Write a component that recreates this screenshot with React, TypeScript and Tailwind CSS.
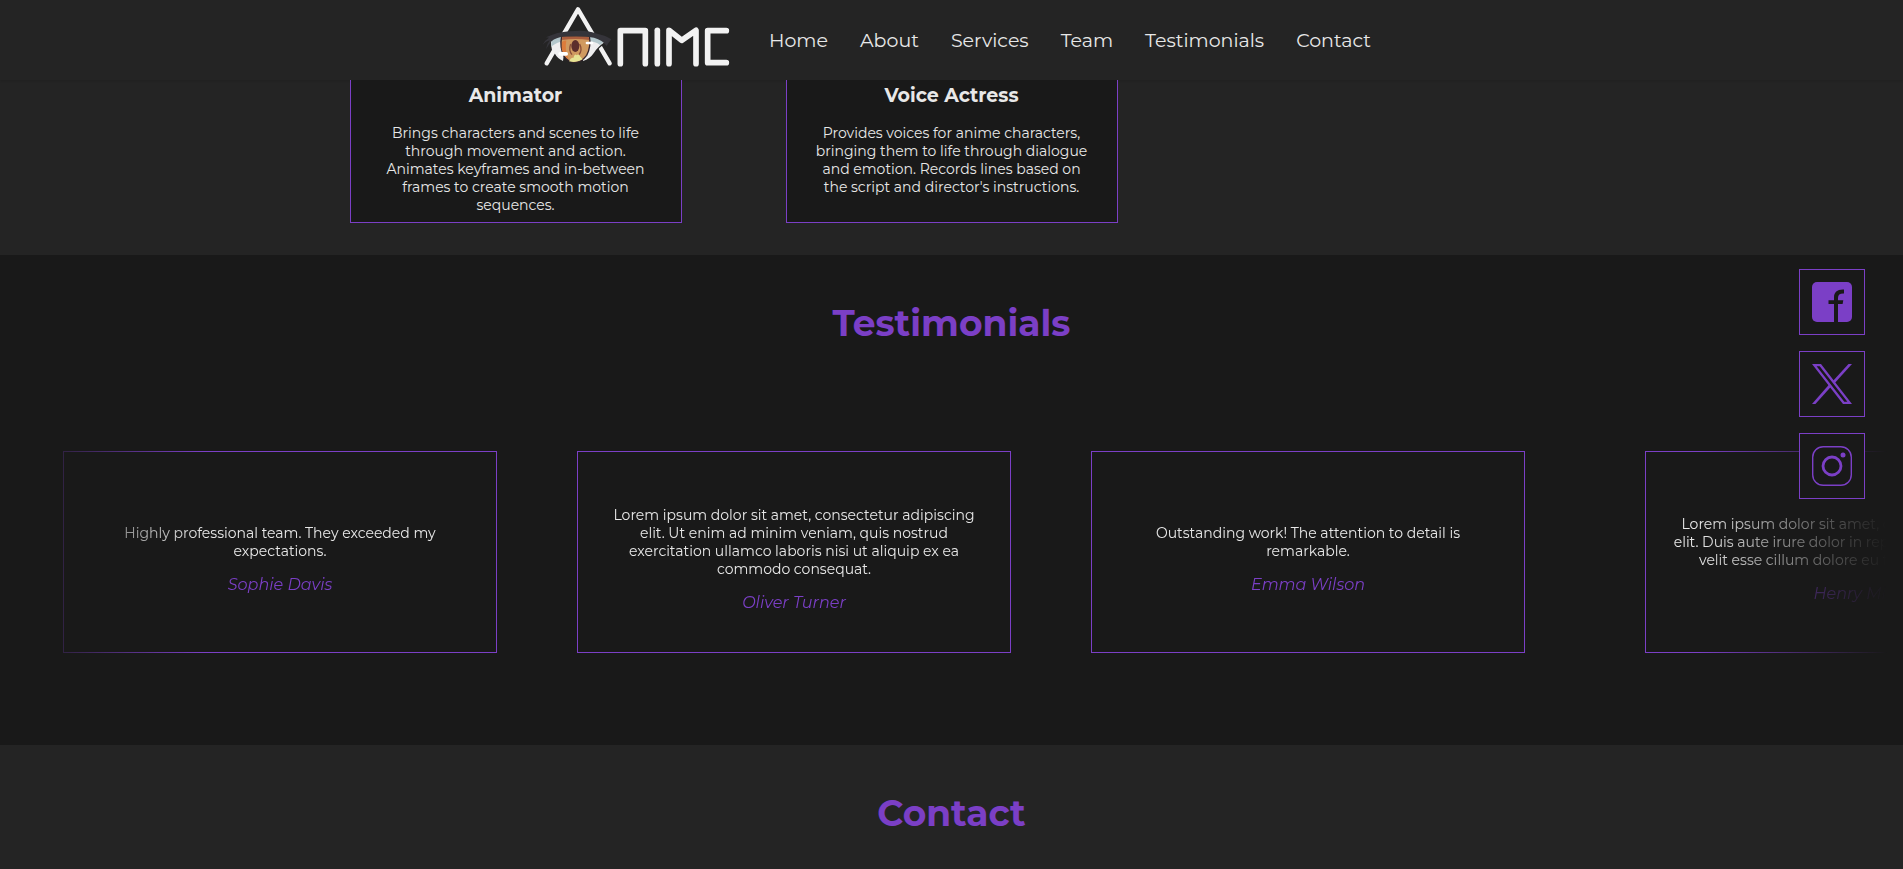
import React from "react";

const navLinks = ["Home", "About", "Services", "Team", "Testimonials", "Contact"];

const team = [
  {
    role: "Animator",
    text: "Brings characters and scenes to life through movement and action. Animates keyframes and in-between frames to create smooth motion sequences.",
  },
  {
    role: "Voice Actress",
    text: "Provides voices for anime characters, bringing them to life through dialogue and emotion. Records lines based on the script and director's instructions.",
  },
];

const testimonialGroups = [
  [
    { name: "Sophie Davis", text: "Highly professional team. They exceeded my expectations." },
    {
      name: "Oliver Turner",
      text: "Lorem ipsum dolor sit amet, consectetur adipiscing elit. Ut enim ad minim veniam, quis nostrud exercitation ullamco laboris nisi ut aliquip ex ea commodo consequat.",
    },
    { name: "Emma Wilson", text: "Outstanding work! The attention to detail is remarkable." },
  ],
  [
    {
      name: "Henry Miller",
      text: "Lorem ipsum dolor sit amet, consectetur adipiscing elit. Duis aute irure dolor in reprehenderit in voluptate velit esse cillum dolore eu fugiat nulla pariatur.",
    },
  ],
];

function Logo() {
  return (
    <svg viewBox="0 0 615 240" className="h-20 w-[205px]" role="img" aria-label="Anime">
      <g fill="none" stroke="#f2f2f2" strokeLinecap="round" strokeLinejoin="round" strokeWidth="14">
        <path d="M44 190 L138 28 L233 190" strokeWidth="13" />
        <path d="M265 191 V92 H340 V191" strokeWidth="17" />
        <path d="M376 91 V191" strokeWidth="17" />
        <path d="M411 191 V91 L449 121 L492 91 V191" strokeWidth="17" />
        <path d="M583 92 H527 V188 H583" strokeWidth="17" />
      </g>
      <path d="M54 122 L100 98 H178 L220 126 Q212 138 203 143 L166 186 H98 L66 150 Z" fill="#242424" />
      <path d="M60 121 Q85 104 102 110 L93 183 Q76 176 68 160 L60 150 Q56 134 57 124 Z" fill="#eeeeef" />
      <path d="M160 108 Q190 106 218 126 Q196 142 186 158 Q174 176 153 183 Z" fill="#eeeeef" />
      <path d="M59 120 Q76 106 100 108 L96 122 Q74 126 57 140 Z" fill="#b3c7cc" />
      <path d="M166 108 Q196 108 215 126 L204 135 Q190 124 170 124 Z" fill="#b3c7cc" />
      <path d="M89 108 H172 Q178 140 164 166 Q148 187 129 187 Q108 186 97 170 Q82 144 89 108 Z" fill="#d09a60" stroke="#35232a" strokeWidth="4" />
      <path d="M91 110 H170 L172 120 Q130 114 90 120 Z" fill="#a95c3d" />
      <path d="M90 126 Q96 120 103 122 Q97 150 110 178 Q94 168 89 146 Z" fill="#dd7c3c" />
      <path d="M116 132 Q109 152 120 164 M143 132 Q152 150 141 164" fill="none" stroke="#8a4f38" strokeWidth="4" />
      <path d="M111 184 Q117 170 124 174 Q128 158 134 166 Q140 160 145 170 L152 178 Q134 190 111 184 Z" fill="#e7e494" />
      <ellipse cx="130" cy="138" rx="12" ry="18" fill="#5c2e2c" />
      <rect x="79" y="156" width="29" height="11" rx="5" fill="#fff" />
      <rect x="161" y="125" width="23" height="8" rx="4" fill="#fff" />
      <path
        d="M42 112 Q76 96 112 94 Q162 88 191 100 Q216 105 238 118 Q230 128 224 138 Q212 120 186 113 Q150 105 104 109 Q72 111 57 125 Q50 134 42 148 Q44 132 53 121 Q42 124 32 134 Q38 121 51 113 Z"
        fill="#35343a"
      />
    </svg>
  );
}

function FacebookIcon() {
  return (
    <svg viewBox="0 0 40 40" className="size-10" aria-hidden="true">
      <rect width="40" height="40" rx="5" fill="#7b3fc6" />
      <path d="M22 40 V22 H16.5 V18.3 H22 V15.5 C22 10 25.5 7.2 32 7.6 V11.4 C28 11.2 26 12.6 26 16 V18.3 H31.3 L30.6 22 H26 V40 Z" fill="#191919" />
    </svg>
  );
}

function XIcon() {
  return (
    <svg viewBox="0 0 40 40" className="size-10" aria-hidden="true">
      <g fill="#7b3fc6">
        <path d="M36.5 0 H40 L22.6 19.3 L20.7 17.2 Z" />
        <path d="M0 40 H3.4 L19.4 22.2 L17.5 20.1 Z" />
        <path fillRule="evenodd" d="M0 0 H9 L40 40 H31 Z M4.6 2.3 L32.3 37.7 H35.4 L7.7 2.3 Z" />
      </g>
    </svg>
  );
}

function InstagramIcon() {
  return (
    <svg viewBox="0 0 40 40" className="size-10" fill="none" stroke="#7b3fc6" aria-hidden="true">
      <rect x="0.7" y="0.7" width="38.6" height="38.6" rx="10.5" strokeWidth="1.4" />
      <circle cx="20" cy="20" r="9" strokeWidth="2.8" />
      <circle cx="31" cy="9" r="2.5" fill="#7b3fc6" stroke="none" />
    </svg>
  );
}

const socials = [
  { label: "Facebook", Icon: FacebookIcon },
  { label: "X", Icon: XIcon },
  { label: "Instagram", Icon: InstagramIcon },
];

export default function App() {
  return (
    <div className="min-h-screen bg-[#242424] font-['Montserrat','Inter',sans-serif] text-[#e8e8e8]">
      <header className="flex h-20 items-center justify-center gap-8 shadow-[0_1px_2px_rgba(0,0,0,0.12)]">
        <a href="#home">
          <Logo />
        </a>
        <nav className="flex gap-8 pt-0.5 text-[19px]/7">
          {navLinks.map((label) => (
            <a key={label} href={`#${label.toLowerCase()}`}>
              {label}
            </a>
          ))}
        </nav>
      </header>

      <main>
        <section id="team" className="grid grid-cols-[repeat(3,332px)] justify-center gap-[104px] pb-8">
          {team.map((member) => (
            <article
              key={member.role}
              className="h-[143px] border border-t-0 border-[#7b3fc6] bg-[#191919] px-7 pt-1 text-center"
            >
              <h3 className="text-[19px]/6 font-bold">{member.role}</h3>
              <p className="mt-4 text-sm/[18px]">{member.text}</p>
            </article>
          ))}
        </section>

        <section id="testimonials" className="bg-[#191919] px-4 pt-11 pb-[92px]">
          <h2 className="text-center text-4xl/[48px] font-bold text-[#7b3fc6]">Testimonials</h2>
          <div className="mt-[104px] flex gap-[120px] overflow-hidden pl-[47px] [mask-image:linear-gradient(to_right,transparent,black_10%,black_90%,transparent)]">
            {testimonialGroups.map((group, index) => (
              <div key={index} className="flex shrink-0 gap-20">
                {group.map((item) => (
                  <figure
                    key={item.name}
                    className="flex h-[202px] w-[434px] shrink-0 flex-col items-center justify-center border border-[#7b3fc6] px-[22px] pt-[14px] text-center"
                  >
                    <blockquote className="text-sm/[18px]">{item.text}</blockquote>
                    <figcaption className="mt-[15px] text-base/5 text-[#7b3fc6] italic">{item.name}</figcaption>
                  </figure>
                ))}
              </div>
            ))}
          </div>
        </section>

        <section id="contact" className="pt-11 pb-8">
          <h2 className="text-center text-4xl/[48px] font-bold text-[#7b3fc6]">Contact</h2>
        </section>
      </main>

      <aside className="fixed top-[269px] right-[2%] flex flex-col gap-4">
        {socials.map(({ label, Icon }) => (
          <a
            key={label}
            href={`#${label.toLowerCase()}`}
            aria-label={label}
            className="flex size-[66px] items-center justify-center border border-[#7b3fc6] bg-[#191919]"
          >
            <Icon />
          </a>
        ))}
      </aside>
    </div>
  );
}
